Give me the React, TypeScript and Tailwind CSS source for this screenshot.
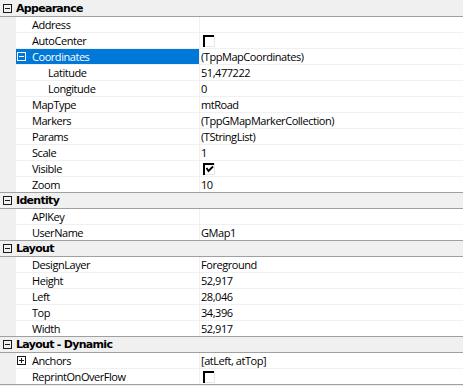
import React from 'react'

type Row = {
  name: string
  value?: string
  check?: boolean
  expand?: 'plus' | 'minus'
  indent?: boolean
  selected?: boolean
}

type Group = {
  title: string
  rows: Row[]
}

const groups: Group[] = [
  {
    title: 'Appearance',
    rows: [
      { name: 'Address', value: '' },
      { name: 'AutoCenter', check: false },
      { name: 'Coordinates', value: '(TppMapCoordinates)', expand: 'minus', selected: true },
      { name: 'Latitude', value: '51,477222', indent: true },
      { name: 'Longitude', value: '0', indent: true },
      { name: 'MapType', value: 'mtRoad' },
      { name: 'Markers', value: '(TppGMapMarkerCollection)' },
      { name: 'Params', value: '(TStringList)' },
      { name: 'Scale', value: '1' },
      { name: 'Visible', check: true },
      { name: 'Zoom', value: '10' },
    ],
  },
  {
    title: 'Identity',
    rows: [
      { name: 'APIKey', value: '' },
      { name: 'UserName', value: 'GMap1' },
    ],
  },
  {
    title: 'Layout',
    rows: [
      { name: 'DesignLayer', value: 'Foreground' },
      { name: 'Height', value: '52,917' },
      { name: 'Left', value: '28,046' },
      { name: 'Top', value: '34,396' },
      { name: 'Width', value: '52,917' },
    ],
  },
  {
    title: 'Layout - Dynamic',
    rows: [
      { name: 'Anchors', value: '[atLeft, atTop]', expand: 'plus' },
      { name: 'ReprintOnOverFlow', check: false },
    ],
  },
]

function ExpandBox({ kind, light }: { kind: 'plus' | 'minus'; light?: boolean }) {
  const c = light ? '#ffffff' : '#1a1a1a'
  return (
    <svg width="9" height="9" viewBox="0 0 9 9" className="shrink-0">
      <rect x="0.5" y="0.5" width="8" height="8" fill="none" stroke={c} />
      <line x1="2" y1="4.5" x2="7" y2="4.5" stroke={c} />
      {kind === 'plus' && <line x1="4.5" y1="2" x2="4.5" y2="7" stroke={c} />}
    </svg>
  )
}

function CheckBox({ checked }: { checked: boolean }) {
  return (
    <svg width="12" height="12" viewBox="0 0 12 12" className="ml-[2px] mt-px shrink-0">
      <path d="M11.5 0 V11.5 H0" fill="none" stroke="#e6e6e6" />
      <path d="M1 12 V1 H11" fill="none" stroke="#000" strokeWidth="2" />
      {checked && <path d="M3.5 5 L5.5 8 L10 3.5" fill="none" stroke="#000" strokeWidth="1.8" />}
    </svg>
  )
}

function PropRow({ row, last }: { row: Row; last: boolean }) {
  return (
    <div
      className={`flex h-[16px] border-b ${last ? 'border-[#a0a0a0]' : 'border-[#f0f0f0]'}`}
    >
      <div className="w-[16px] shrink-0 bg-[#f0f0f0]" />
      <div
        className={`relative flex w-[184px] shrink-0 items-center border-r border-[#f0f0f0] ${
          row.selected ? 'bg-[#0078d7] text-white' : 'bg-white text-black'
        } ${row.indent ? 'pl-[32px]' : 'pl-[16px]'}`}
      >
        {row.expand && (
          <div className="absolute left-[1px] top-[3px]">
            <ExpandBox kind={row.expand} light={row.selected} />
          </div>
        )}
        <span className="whitespace-nowrap">{row.name}</span>
      </div>
      <div className="flex flex-1 items-center bg-white pl-px text-black">
        {row.check !== undefined ? (
          <CheckBox checked={row.check} />
        ) : (
          <span className="whitespace-nowrap">{row.value}</span>
        )}
      </div>
    </div>
  )
}

export default function App() {
  return (
    <div className="h-[386px] w-[463px] overflow-hidden bg-[#f0f0f0] pt-px font-['Open_Sans',sans-serif] text-[11px] leading-[15px] tracking-[-0.45px]">
      {groups.map((g) => (
        <div key={g.title}>
          <div className="flex h-[16px] items-center border-b border-[#a0a0a0] bg-[#f0f0f0]">
            <div className="ml-[3px] -mt-px">
              <ExpandBox kind="minus" />
            </div>
            <span className="ml-[4px] font-['DejaVu_Sans',sans-serif] text-[11px] font-bold tracking-[-0.7px] text-black">
              {g.title}
            </span>
          </div>
          {g.rows.map((r, i) => (
            <PropRow key={r.name} row={r} last={i === g.rows.length - 1} />
          ))}
        </div>
      ))}
    </div>
  )
}
